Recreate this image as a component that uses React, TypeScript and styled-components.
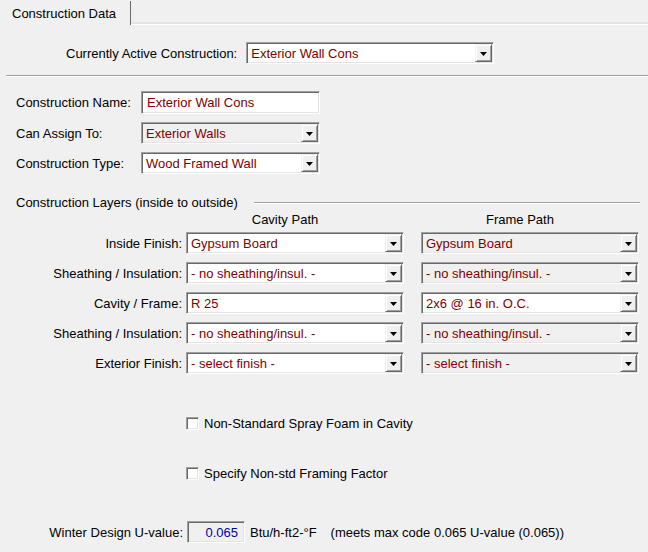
import React from 'react';
import styled, { createGlobalStyle } from 'styled-components';

const GlobalStyle = createGlobalStyle`
  html, body {
    margin: 0;
    padding: 0;
    background: #f0f0f0;
  }
`;

interface ComboProps {
  value: string;
  width: number;
  shaded?: boolean;
}

interface LayerRow {
  label: string;
  cavity: string;
  frame: string;
  frameShaded: boolean;
}

const layers: LayerRow[] = [
  { label: 'Inside Finish:', cavity: 'Gypsum Board', frame: 'Gypsum Board', frameShaded: true },
  { label: 'Sheathing / Insulation:', cavity: '- no sheathing/insul. -', frame: '- no sheathing/insul. -', frameShaded: true },
  { label: 'Cavity / Frame:', cavity: 'R 25', frame: '2x6 @ 16 in. O.C.', frameShaded: false },
  { label: 'Sheathing / Insulation:', cavity: '- no sheathing/insul. -', frame: '- no sheathing/insul. -', frameShaded: true },
  { label: 'Exterior Finish:', cavity: '- select finish -', frame: '- select finish -', frameShaded: true },
];

const Combo: React.FC<ComboProps> = ({ value, width, shaded }) => (
  <ComboBox $w={width} $shaded={shaded}>
    <ComboText>{value}</ComboText>
    <DropButton>
      <svg width="7" height="4" viewBox="0 0 7 4">
        <polygon points="0,0 7,0 3.5,4" fill="#000" />
      </svg>
    </DropButton>
  </ComboBox>
);

const App: React.FC = () => {
  return (
    <Page>
      <GlobalStyle />
      <TabStrip>
        <Tab>Construction Data</Tab>
        <TabFill />
      </TabStrip>

      <ActiveRow>
        <span>Currently Active Construction:</span>
        <Combo value="Exterior Wall Cons" width={248} />
      </ActiveRow>

      <Divider />

      <NameGrid>
        <Label>Construction Name:</Label>
        <TextBox>Exterior Wall Cons</TextBox>
        <Label>Can Assign To:</Label>
        <Combo value="Exterior Walls" width={179} shaded />
        <Label>Construction Type:</Label>
        <Combo value="Wood Framed Wall" width={179} />
      </NameGrid>

      <SectionHeader>
        <span>Construction Layers (inside to outside)</span>
        <SectionLine />
      </SectionHeader>

      <ColumnHeaders>
        <span />
        <ColumnTitle>Cavity Path</ColumnTitle>
        <ColumnTitle>Frame Path</ColumnTitle>
      </ColumnHeaders>

      <LayerGrid>
        {layers.map((row, i) => (
          <React.Fragment key={i}>
            <RightLabel>{row.label}</RightLabel>
            <Combo value={row.cavity} width={218} />
            <Combo value={row.frame} width={218} shaded={row.frameShaded} />
          </React.Fragment>
        ))}
      </LayerGrid>

      <CheckRow $top={42}>
        <CheckBox />
        <span>Non-Standard Spray Foam in Cavity</span>
      </CheckRow>
      <CheckRow $top={35}>
        <CheckBox />
        <span>Specify Non-std Framing Factor</span>
      </CheckRow>

      <ResultRow>
        <ResultLabel>Winter Design U-value:</ResultLabel>
        <ValueBox>0.065</ValueBox>
        <Units>Btu/h-ft2-°F</Units>
        <Note>(meets max code 0.065 U-value (0.065))</Note>
      </ResultRow>
    </Page>
  );
};

// Styled Components
const Page = styled.div`
  width: 648px;
  height: 552px;
  overflow: hidden;
  background: #f0f0f0;
  color: #000;
  font-family: "Liberation Sans", Arial, sans-serif;
  font-size: 13px;
  line-height: 15px;
`;

const TabStrip = styled.div`
  display: flex;
  height: 25px;
`;

const Tab = styled.div`
  width: 131px;
  box-sizing: border-box;
  padding: 5px 0 0 12px;
  border-right: 1px solid #696969;
  margin-top: 1px;
  background: #f0f0f0;
`;

const TabFill = styled.div`
  flex: 1;
  border-bottom: 1px solid #ffffff;
  box-shadow: inset 0 -2px 0 #e3e3e3;
`;

const ActiveRow = styled.div`
  display: flex;
  align-items: center;
  gap: 9px;
  margin-top: 17px;
  padding-left: 66px;
`;

const Divider = styled.div`
  margin: 11px 0 0 6px;
  border-top: 1px solid #a0a0a0;
  border-bottom: 1px solid #ffffff;
`;

const NameGrid = styled.div`
  display: grid;
  grid-template-columns: 125px 179px;
  grid-template-rows: 23px 22px 22px;
  row-gap: 8px;
  align-items: center;
  margin-top: 14px;
  padding-left: 16px;
`;

const Label = styled.span`
  white-space: nowrap;
`;

const RightLabel = styled.span`
  text-align: right;
  padding-right: 4px;
  white-space: nowrap;
`;

const sunken = `
  box-sizing: border-box;
  border: 1px solid;
  border-color: #a0a0a0 #ffffff #ffffff #a0a0a0;
  box-shadow: inset 1px 1px 0 #696969, inset -1px -1px 0 #e3e3e3;
`;

const TextBox = styled.div`
  ${sunken}
  height: 23px;
  padding: 3px 0 0 5px;
  background: #ffffff;
  color: #800000;
  white-space: nowrap;
`;

const ComboBox = styled.div<{ $w: number; $shaded?: boolean }>`
  ${sunken}
  display: flex;
  align-items: stretch;
  width: ${(p) => p.$w}px;
  height: 22px;
  padding: 1px;
  background: ${(p) => (p.$shaded ? '#f0f0f0' : '#ffffff')};
`;

const ComboText = styled.span`
  flex: 1;
  padding: 1px 0 0 3px;
  line-height: 18px;
  color: #800000;
  white-space: nowrap;
  overflow: hidden;
`;

const DropButton = styled.span`
  width: 17px;
  box-sizing: border-box;
  display: flex;
  align-items: center;
  justify-content: center;
  padding-top: 1px;
  background: #f0f0f0;
  border: 1px solid;
  border-color: #f0f0f0 #696969 #696969 #f0f0f0;
  box-shadow: inset 1px 1px 0 #ffffff, inset -1px -1px 0 #a0a0a0;
`;

const SectionHeader = styled.div`
  display: flex;
  align-items: center;
  margin-top: 21px;
  padding: 0 8px 0 16px;
`;

const SectionLine = styled.div`
  flex: 1;
  margin-left: 16px;
  border-top: 1px solid #a0a0a0;
  border-bottom: 1px solid #ffffff;
`;

const ColumnHeaders = styled.div`
  display: grid;
  grid-template-columns: 186px 235px 218px;
  margin-top: 2px;
`;

const ColumnTitle = styled.span`
  width: 218px;
  box-sizing: border-box;
  text-align: center;
  padding-right: 20px;
`;

const LayerGrid = styled.div`
  display: grid;
  grid-template-columns: 186px 235px 218px;
  grid-auto-rows: 22px;
  row-gap: 8px;
  align-items: center;
  justify-items: start;
  margin-top: 5px;

  & > ${RightLabel} {
    justify-self: stretch;
  }
`;

const CheckRow = styled.label<{ $top: number }>`
  display: flex;
  align-items: center;
  gap: 5px;
  height: 15px;
  margin-top: ${(p) => p.$top}px;
  padding-left: 186px;
`;

const CheckBox = styled.span`
  ${sunken}
  width: 13px;
  height: 13px;
  background: #ffffff;
`;

const ResultRow = styled.div`
  display: flex;
  align-items: center;
  margin-top: 40px;
  height: 22px;
`;

const ResultLabel = styled.span`
  width: 187px;
  box-sizing: border-box;
  text-align: right;
  padding-right: 4px;
  white-space: nowrap;
`;

const ValueBox = styled.div`
  ${sunken}
  width: 58px;
  height: 22px;
  padding: 3px 6px 0 0;
  text-align: right;
  background: #f0f0f0;
  color: #0000a0;
`;

const Units = styled.span`
  padding-left: 5px;
`;

const Note = styled.span`
  padding-left: 14px;
`;

export default App;
